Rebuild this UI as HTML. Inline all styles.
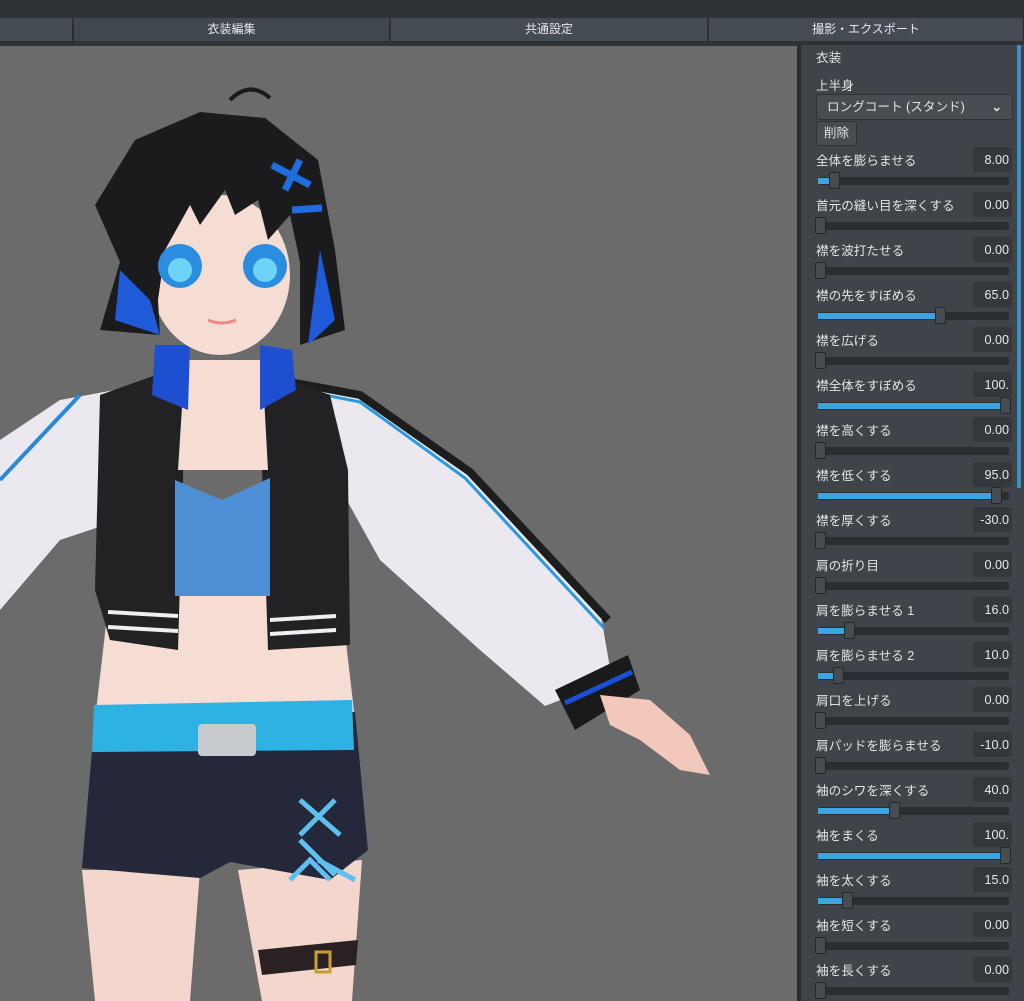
<!DOCTYPE html><html><head><meta charset="utf-8"><style>
*{margin:0;padding:0;box-sizing:border-box}
body{width:1024px;height:1001px;overflow:hidden;background:#6b6b6b;font-family:"Liberation Sans","Noto Sans CJK JP",sans-serif;position:relative}
#top{position:absolute;left:0;top:0;width:1024px;height:46px;background:#2f3336}
.tab{position:absolute;top:18px;height:23px;background:#454b52;color:#e6e8ea;font-size:12px;text-align:center;line-height:23px;border-right:1px solid #2a2d30}
#panel{position:absolute;left:797px;top:45px;width:227px;height:956px;background:#3f444a;border-left:4px solid #2b2e31;color:#dfe2e4;font-size:12px}
.a{position:absolute}
.lbl{position:absolute;left:15px;font-size:12.6px;line-height:16px;color:#e2e4e6;margin-top:1px}
.val{position:absolute;left:172px;width:39px;height:25px;background:#34383d;border-radius:3px;text-align:right;padding-right:3px;padding-top:5px;line-height:16px;font-size:12.6px;color:#e8e8e8}
.trk{position:absolute;left:17px;width:191px;height:8px;background:#2a2d31;border-radius:2px}
.fill{position:absolute;left:0;top:1px;height:6px;background:#3aa5e0}
.h{position:absolute;width:11px;height:17px;top:-5px;background:#474c52;border:1px solid #25282b;border-radius:2px}
</style></head><body>
<div id="top">
<div class="tab" style="left:0;width:73px"></div>
<div class="tab" style="left:74px;width:316px;background:#41474e">衣装編集</div>
<div class="tab" style="left:391px;width:317px">共通設定</div>
<div class="tab" style="left:709px;width:315px">撮影・エクスポート</div>
</div>

<svg class="a" style="left:0;top:46px" width="797" height="955" viewBox="0 46 797 955">
<path d="M82 870 L200 870 L190 1001 L95 1001 Z" fill="#f3d6cc"/>
<path d="M238 870 L362 860 L352 1001 L262 1001 Z" fill="#f3d6cc"/>
<path d="M258 950 L358 940 L356 965 L262 975 Z" fill="#2a2222"/>
<rect x="316" y="952" width="14" height="20" fill="none" stroke="#c8a030" stroke-width="3"/>
<path d="M110 590 L340 590 L355 720 L95 720 Z" fill="#f6ddd4"/>
<path d="M95 715 L355 712 L368 850 L330 880 L230 862 L200 878 L82 868 Z" fill="#24283a"/>
<path d="M94 705 L352 700 L354 750 L92 752 Z" fill="#2eb2e3"/>
<rect x="198" y="724" width="58" height="32" rx="4" fill="#c8cbcd"/>
<path d="M300 800 L340 835 M335 800 L300 835 M300 840 L335 875 M290 880 L310 860 L330 880 M318 860 L355 880" stroke="#5ec0ef" stroke-width="5" fill="none"/>
<path d="M0 440 L60 400 L115 390 L120 520 L60 540 L0 610 Z" fill="#ece8ef"/>
<path d="M0 480 L80 395" stroke="#2a8ad8" stroke-width="4"/>
<path d="M270 380 L350 390 L470 470 L600 610 L612 680 L545 706 L480 650 L380 560 L330 470 Z" fill="#ece8ef"/>
<path d="M290 382 L360 395 L470 472 L608 620" stroke="#1d1d1d" stroke-width="8" fill="none"/>
<path d="M290 388 L360 402 L465 478 L604 628" stroke="#2a9ae0" stroke-width="3" fill="none"/>
<path d="M555 690 L628 655 L640 690 L575 730 Z" fill="#1a1a1a"/>
<path d="M565 703 L632 672" stroke="#1a4fd8" stroke-width="5"/>
<path d="M600 695 L650 700 L690 735 L710 775 L680 770 L640 740 L610 725 Z" fill="#f2c8bc"/>
<path d="M100 395 L170 370 L185 410 L178 650 L110 640 L95 590 Z" fill="#222224"/>
<path d="M262 370 L330 395 L348 470 L350 645 L268 650 L262 470 Z" fill="#222224"/>
<path d="M108 612 L178 616 M108 627 L178 631 M270 620 L336 616 M270 634 L336 630" stroke="#f0f0f0" stroke-width="4"/>
<path d="M185 360 L262 360 L268 470 L178 470 Z" fill="#f6ddd4"/>
<path d="M175 480 L222 500 L270 478 L270 596 L175 596 Z" fill="#4f8fd6"/>
<path d="M155 345 L190 345 L188 410 L152 395 Z M260 345 L292 350 L296 390 L260 410 Z" fill="#1d4fd0"/>
<ellipse cx="220" cy="275" rx="70" ry="80" fill="#f6ddd4"/>
<path d="M95 205 L135 140 L200 112 L265 118 L318 160 L335 250 L345 330 L300 345 L300 262 L290 215 L268 240 L258 200 L235 215 L225 190 L200 225 L190 205 L165 250 L158 300 L160 335 L100 330 L120 262 Z" fill="#1b1b1e"/>
<path d="M120 270 L150 300 L160 335 L115 320 Z M320 250 L335 320 L308 345 Z" fill="#1f5bd8"/>
<path d="M230 100 Q250 80 270 98" stroke="#1b1b1e" stroke-width="4" fill="none"/>
<path d="M272 165 L310 185 M300 160 L285 190 M292 210 L322 208" stroke="#1e6ee0" stroke-width="7"/>
<ellipse cx="180" cy="266" rx="22" ry="22" fill="#2a8de0"/>
<ellipse cx="265" cy="266" rx="22" ry="22" fill="#2a8de0"/>
<ellipse cx="180" cy="270" rx="12" ry="12" fill="#6fd3f8"/>
<ellipse cx="265" cy="270" rx="12" ry="12" fill="#6fd3f8"/>
<path d="M208 320 Q222 326 236 320" stroke="#e88" stroke-width="3" fill="none"/>
</svg>

<div id="panel">
<div class="lbl" style="top:4px">衣装</div>
<div class="lbl" style="top:32px">上半身</div>
<div class="a" style="left:15px;top:49px;width:197px;height:26px;background:#474c53;border:1px solid #2e3236;border-radius:3px;line-height:24px;padding-left:10px;font-size:12.6px">ロングコート (スタンド)<span style="position:absolute;right:10px;top:0;font-weight:bold">⌄</span></div>
<div class="a" style="left:15px;top:76px;width:41px;height:25px;background:#474c53;border:1px solid #2e3236;border-radius:3px;line-height:23px;text-align:center;font-size:12.6px">削除</div>
<div class="a" style="right:3px;top:0;width:4px;height:443px;background:#3a8fc4"></div>

<div class="lbl" style="top:107px">全体を膨らませる</div><div class="val" style="top:102px">8.00</div><div class="trk" style="top:132px"><div class="fill" style="width:15px"></div><div class="h" style="left:11px"></div></div>
<div class="lbl" style="top:152px">首元の縫い目を深くする</div><div class="val" style="top:147px">0.00</div><div class="trk" style="top:177px"><div class="h" style="left:-3px"></div></div>
<div class="lbl" style="top:197px">襟を波打たせる</div><div class="val" style="top:192px">0.00</div><div class="trk" style="top:222px"><div class="h" style="left:-3px"></div></div>
<div class="lbl" style="top:242px">襟の先をすぼめる</div><div class="val" style="top:237px">65.0</div><div class="trk" style="top:267px"><div class="fill" style="width:121px"></div><div class="h" style="left:117px"></div></div>
<div class="lbl" style="top:287px">襟を広げる</div><div class="val" style="top:282px">0.00</div><div class="trk" style="top:312px"><div class="h" style="left:-3px"></div></div>
<div class="lbl" style="top:332px">襟全体をすぼめる</div><div class="val" style="top:327px">100.</div><div class="trk" style="top:357px"><div class="fill" style="width:186px"></div><div class="h" style="left:182px"></div></div>
<div class="lbl" style="top:377px">襟を高くする</div><div class="val" style="top:372px">0.00</div><div class="trk" style="top:402px"><div class="h" style="left:-3px"></div></div>
<div class="lbl" style="top:422px">襟を低くする</div><div class="val" style="top:417px">95.0</div><div class="trk" style="top:447px"><div class="fill" style="width:177px"></div><div class="h" style="left:173px"></div></div>
<div class="lbl" style="top:467px">襟を厚くする</div><div class="val" style="top:462px">-30.0</div><div class="trk" style="top:492px"><div class="h" style="left:-3px"></div></div>
<div class="lbl" style="top:512px">肩の折り目</div><div class="val" style="top:507px">0.00</div><div class="trk" style="top:537px"><div class="h" style="left:-3px"></div></div>
<div class="lbl" style="top:557px">肩を膨らませる 1</div><div class="val" style="top:552px">16.0</div><div class="trk" style="top:582px"><div class="fill" style="width:30px"></div><div class="h" style="left:26px"></div></div>
<div class="lbl" style="top:602px">肩を膨らませる 2</div><div class="val" style="top:597px">10.0</div><div class="trk" style="top:627px"><div class="fill" style="width:19px"></div><div class="h" style="left:15px"></div></div>
<div class="lbl" style="top:647px">肩口を上げる</div><div class="val" style="top:642px">0.00</div><div class="trk" style="top:672px"><div class="h" style="left:-3px"></div></div>
<div class="lbl" style="top:692px">肩パッドを膨らませる</div><div class="val" style="top:687px">-10.0</div><div class="trk" style="top:717px"><div class="h" style="left:-3px"></div></div>
<div class="lbl" style="top:737px">袖のシワを深くする</div><div class="val" style="top:732px">40.0</div><div class="trk" style="top:762px"><div class="fill" style="width:75px"></div><div class="h" style="left:71px"></div></div>
<div class="lbl" style="top:782px">袖をまくる</div><div class="val" style="top:777px">100.</div><div class="trk" style="top:807px"><div class="fill" style="width:186px"></div><div class="h" style="left:182px"></div></div>
<div class="lbl" style="top:827px">袖を太くする</div><div class="val" style="top:822px">15.0</div><div class="trk" style="top:852px"><div class="fill" style="width:28px"></div><div class="h" style="left:24px"></div></div>
<div class="lbl" style="top:872px">袖を短くする</div><div class="val" style="top:867px">0.00</div><div class="trk" style="top:897px"><div class="h" style="left:-3px"></div></div>
<div class="lbl" style="top:917px">袖を長くする</div><div class="val" style="top:912px">0.00</div><div class="trk" style="top:942px"><div class="h" style="left:-3px"></div></div>
</div>
</body></html>
